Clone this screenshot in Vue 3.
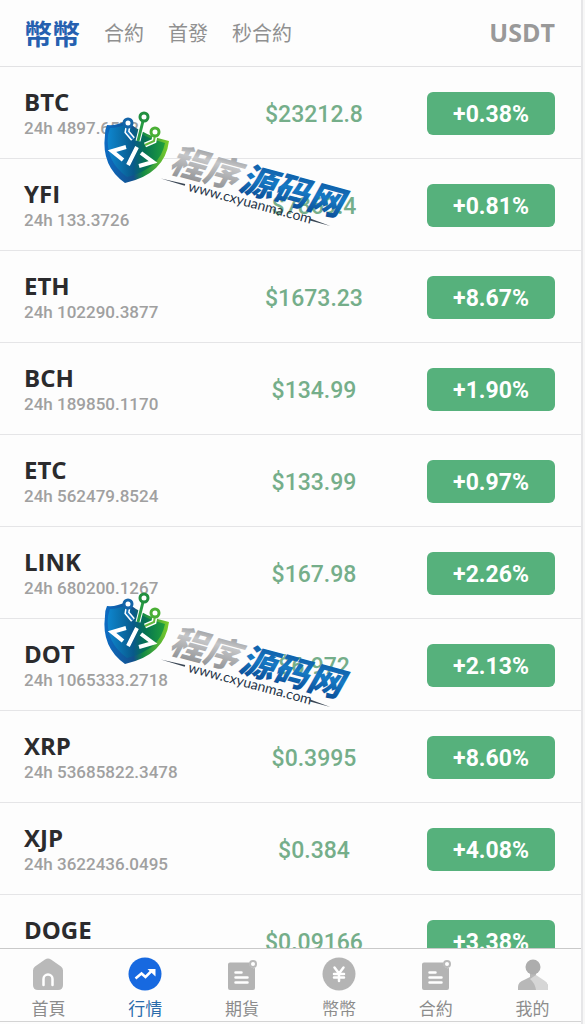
<template>
  <div class="page">
    <header class="tabs">
      <nav class="tab-list">
        <button
          v-for="(tab, i) in tabs"
          :key="tab"
          type="button"
          :class="['tab', { active: i === activeTab }]"
          @click="activeTab = i"
        >{{ tab }}</button>
      </nav>
      <span class="quote">USDT</span>
    </header>

    <main class="market">
      <div v-for="coin in coins" :key="coin.name" class="row">
        <div class="coin">
          <div class="name">{{ coin.name }}</div>
          <div v-if="coin.volume" class="volume">24h {{ coin.volume }}</div>
        </div>
        <div class="price">${{ coin.price }}</div>
        <button type="button" class="change">{{ coin.change }}</button>
      </div>
    </main>

    <footer class="menu">
      <a
        v-for="item in menu"
        :key="item.icon"
        href="#"
        :class="['menu-item', { active: item.active }]"
      >
        <svg viewBox="0 0 34 34" class="menu-icon" aria-hidden="true">
          <template v-if="item.icon === 'home'">
            <path fill="#b9b9b9" d="M14 2.500Q17 .3 20 2.500L30 9.500Q32 11 32 13.500V28Q32 33 27 33H7Q2 33 2 28V13.500Q2 11 4 9.500Z" />
            <path fill="none" stroke="#fff" stroke-width="2.500" stroke-linecap="round" d="M12.500 28v-6a4.500 4.500 0 0 1 9 0v6" />
          </template>
          <template v-else-if="item.icon === 'market'">
            <circle cx="17" cy="17" r="16.500" fill="#1769e0" />
            <path fill="none" stroke="#fff" stroke-width="2.500" d="M7.500 21.500l6-5 4 3.500 6-6" />
            <path fill="#fff" d="M19.500 12h8v7.500z" />
          </template>
          <template v-else-if="item.icon === 'futures' || item.icon === 'contract'">
            <path fill="#b4b4b4" d="M5 5.500h19.500a4.500 4.500 0 0 0 5.500 5.500v20q0 2-2 2H5q-2 0-2-2V7.500q0-2 2-2z" />
            <circle cx="28" cy="7" r="3" fill="#fff" stroke="#b9b9b9" stroke-width="2" />
            <path stroke="#fff" stroke-width="2.500" stroke-linecap="round" d="M10.500 15.500h6M10.500 20.500h12M10.500 25.500h12" />
          </template>
          <template v-else-if="item.icon === 'coin'">
            <circle cx="17" cy="17" r="16.500" fill="#b4b4b4" />
            <path fill="none" stroke="#fff" stroke-width="2.500" stroke-linecap="round" d="M12.500 10.500l4.500 6 4.500-6M17 16.500V24M12 17h10M12 20.500h10" />
          </template>
          <template v-else>
            <path fill="#b8b8b8" d="M2 33v-3q0-5 6-7l6-3v-4h6v4l6 3q6 2 6 7v3z" />
            <path fill="#d6d6d6" d="M20 18l6 4q6 3 6 8v3H20q-1-7-6-11z" />
            <circle cx="17" cy="10" r="7.500" fill="#adadad" />
          </template>
        </svg>
        <span>{{ item.label }}</span>
      </a>
    </footer>

    <svg
      v-for="place in ['upper', 'lower']"
      :key="place"
      :class="['brand', place]"
      viewBox="0 0 270 130"
      aria-hidden="true"
    >
      <defs>
        <linearGradient :id="place + '-rim'" x1="0" y1="0" x2="1" y2="0">
          <stop offset="0" stop-color="#0d6cc4" />
          <stop offset=".45" stop-color="#12508c" />
          <stop offset=".6" stop-color="#138a45" />
          <stop offset="1" stop-color="#7fce2b" />
        </linearGradient>
        <linearGradient :id="place + '-body'" x1="0" y1="0" x2="1" y2="0">
          <stop offset="0" stop-color="#0e86cf" />
          <stop offset=".45" stop-color="#08598a" />
          <stop offset=".65" stop-color="#067252" />
          <stop offset="1" stop-color="#20a03b" />
        </linearGradient>
        <linearGradient :id="place + '-silver'" x1="0" y1="0" x2="0" y2="1">
          <stop offset="0" stop-color="#77797c" />
          <stop offset=".4" stop-color="#c6c7c9" />
          <stop offset="1" stop-color="#85878a" />
        </linearGradient>
        <linearGradient :id="place + '-blue'" x1="0" y1="0" x2="0" y2="1">
          <stop offset="0" stop-color="#0a4b94" />
          <stop offset=".5" stop-color="#1679c4" />
          <stop offset="1" stop-color="#073f88" />
        </linearGradient>
      </defs>
      <path :fill="`url(#${place}-rim)`" d="M12 24Q21 25 31 20Q50 35 74 40Q70 73 30 82Q6 65 10 34Q10 28 12 24Z" />
      <path :fill="`url(#${place}-body)`" d="M15 27Q24 27 31 23Q49 37 70 42Q65 68 32 76Q10 60 13 34Z" />
      <path fill="none" stroke="#fff" stroke-width="5" d="M33 25l-1 6 6 7M48 20l-5 20M60 34l-1 6-9 4" />
      <path fill="none" stroke="#1976bb" stroke-width="2" d="M33 25l-1 6 6 7" />
      <path fill="none" stroke="#269b43" stroke-width="3" d="M48 20l-5 20" />
      <path fill="none" stroke="#61b93b" stroke-width="2" d="M60 34l-1 6-9 4" />
      <g fill="#fff" stroke-width="3">
        <circle cx="33" cy="22" r="4" stroke="#1464a8" />
        <circle cx="49" cy="16" r="4" stroke="#218f3f" />
        <circle cx="60" cy="31" r="4" stroke="#4aaf35" />
      </g>
      <path fill="none" stroke="#fff" stroke-width="4" d="M31 46l-14 4 11 9M42 46l-9 18M46 52l12 9-14 4" />
      <g transform="translate(73 70) rotate(15)">
        <text class="brand-name" :fill="`url(#${place}-silver)`" x="0" y="0">程序</text>
        <text class="brand-name" :fill="`url(#${place}-blue)`" x="72" y="0">源码网</text>
        <text class="brand-site" x="24" y="14">www.cxyuanma.com</text>
        <path fill="#3a4654" d="M-5 9l25-1v2zM149 9l22 2-22 0z" />
      </g>
    </svg>
  </div>
</template>

<script setup>
import { ref } from 'vue'

const tabs = ['幣幣', '合約', '首發', '秒合約']
const activeTab = ref(0)

const coins = [
  { name: 'BTC', volume: '4897.6572', price: '23212.8', change: '+0.38%' },
  { name: 'YFI', volume: '133.3726', price: '7869.4', change: '+0.81%' },
  { name: 'ETH', volume: '102290.3877', price: '1673.23', change: '+8.67%' },
  { name: 'BCH', volume: '189850.1170', price: '134.99', change: '+1.90%' },
  { name: 'ETC', volume: '562479.8524', price: '133.99', change: '+0.97%' },
  { name: 'LINK', volume: '680200.1267', price: '167.98', change: '+2.26%' },
  { name: 'DOT', volume: '1065333.2718', price: '6.972', change: '+2.13%' },
  { name: 'XRP', volume: '53685822.3478', price: '0.3995', change: '+8.60%' },
  { name: 'XJP', volume: '3622436.0495', price: '0.384', change: '+4.08%' },
  { name: 'DOGE', price: '0.09166', change: '+3.38%' }
]

const menu = [
  { icon: 'home', label: '首頁' },
  { icon: 'market', label: '行情', active: true },
  { icon: 'futures', label: '期貨' },
  { icon: 'coin', label: '幣幣' },
  { icon: 'contract', label: '合約' },
  { icon: 'mine', label: '我的' }
]
</script>

<style>
body {
  background: #f7f7f7;
}
</style>

<style scoped>
.page {
  position: relative;
  display: flex;
  flex-direction: column;
  height: 100vh;
  margin-right: 2px;
  box-sizing: border-box;
  border-right: 2px solid #e6e6e8;
  padding-bottom: 2px;
  overflow: hidden;
  background: #fdfdfd;
  font-family: "Open Sans", "Noto Sans CJK TC", sans-serif;
}

button {
  border: 0;
  padding: 0;
  background: none;
  font-family: inherit;
  cursor: pointer;
}

.tabs {
  display: flex;
  flex: none;
  align-items: center;
  justify-content: space-between;
  box-sizing: border-box;
  height: 67px;
  padding: 2px 26px 0 24px;
  border-bottom: 1px solid #e2e2e4;
}

.tab-list {
  display: flex;
  align-items: center;
  gap: 24px;
}

.tab {
  color: #909090;
  font-size: 20px;
  line-height: 32px;
}

.tab.active {
  color: #2560b0;
  font-size: 28px;
  font-weight: 700;
}

.quote {
  color: #999;
  font-size: 25px;
  font-weight: 700;
  line-height: 28px;
  padding-bottom: 4px;
}

.market {
  flex: 1;
  min-height: 0;
  overflow: hidden;
}

.row {
  display: grid;
  grid-template-columns: 1fr 226px 128px;
  align-items: center;
  box-sizing: border-box;
  height: 92px;
  padding: 2px 26px 0 24px;
  border-bottom: 1px solid #e5e5e7;
}

.coin {
  min-height: 52px;
  white-space: nowrap;
}

.name {
  color: #2b2b2d;
  font-size: 24px;
  font-weight: 700;
  line-height: 28px;
}

.volume {
  color: #a0a0a0;
  font-family: Roboto, sans-serif;
  font-size: 17px;
  font-weight: 500;
  line-height: 24px;
}

.price {
  padding-top: 2px;
  color: #75ae8a;
  font-family: Roboto, sans-serif;
  font-size: 23px;
  font-weight: 500;
  line-height: 28px;
  text-align: center;
}

.change {
  height: 43px;
  border-radius: 6px;
  padding-top: 2px;
  background: #56b17c;
  color: #fff;
  font-family: Roboto, sans-serif;
  font-size: 23px;
  font-weight: 700;
}

.menu {
  display: grid;
  grid-template-columns: repeat(6, 1fr);
  flex: none;
  height: 72px;
  border-top: 1px solid #c9c9c9;
  border-bottom: 1px solid #d4d4d4;
}

.menu-item {
  display: flex;
  flex-direction: column;
  align-items: center;
  padding-top: 8px;
  color: #8c8c8c;
  font-size: 17px;
  line-height: 36px;
  text-decoration: none;
}

.menu-item.active {
  color: #2a6cab;
}

.menu-icon {
  flex: none;
  width: 34px;
  height: 34px;
}

.brand {
  position: absolute;
  left: 95px;
  width: 270px;
  height: 130px;
  pointer-events: none;
}

.brand.upper {
  top: 101px;
}

.brand.lower {
  top: 582px;
}

.brand-name {
  font-family: "Noto Sans CJK SC", sans-serif;
  font-size: 35px;
  font-style: italic;
  font-weight: 900;
}

.brand-site {
  fill: #253448;
  font-family: Lato, sans-serif;
  font-size: 14px;
}
</style>
